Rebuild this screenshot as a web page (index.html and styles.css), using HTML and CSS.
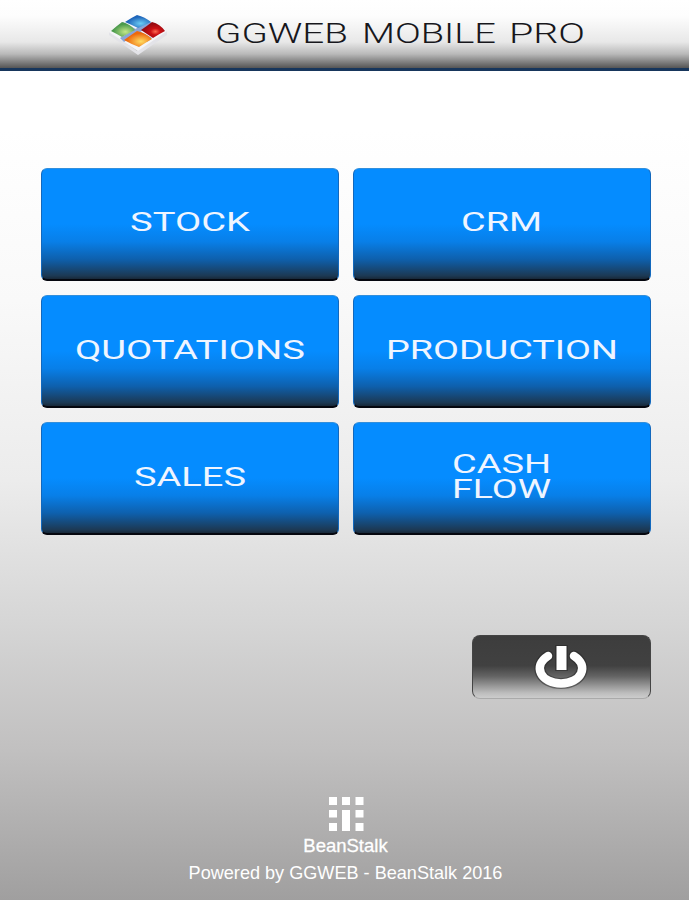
FILE: index.html
```html
<!DOCTYPE html>
<html lang="en">
<head>
    <meta charset="UTF-8">
    <meta name="viewport" content="width=device-width, initial-scale=1.0">
    <title>GGWEB Mobile Pro</title>
    <link rel="stylesheet" href="styles.css">
</head>
<body>
    <header class="header">
        <svg class="logo" width="58" height="46" viewBox="0 0 58 46">
            <defs>
                <radialGradient id="green" cx="60%" cy="65%"><stop offset="0" stop-color="#c4e78a"/><stop offset="1" stop-color="#4b9a4c"/></radialGradient>
                <radialGradient id="blue" cx="60%" cy="65%"><stop offset="0" stop-color="#6ccdf4"/><stop offset="1" stop-color="#1f66bb"/></radialGradient>
                <radialGradient id="red" cx="60%" cy="60%"><stop offset="0" stop-color="#ff6a50"/><stop offset=".4" stop-color="#cb1014"/><stop offset="1" stop-color="#960a10"/></radialGradient>
                <radialGradient id="orange" cx="60%" cy="65%"><stop offset="0" stop-color="#ffdc62"/><stop offset="1" stop-color="#ed690d"/></radialGradient>
            </defs>
            <path d="M0 18 28 37 58 17V21L29 41 0 21Z" fill="#e3e3e8"/>
            <path d="M0 18 28 1 58 17 29 37Z" fill="#f4f5f8"/>
            <path d="M14 8 43 24 38 28 10 11ZM11 24 40 7 44 10 15 28Z" fill="#8aa5d8"/>
            <path d="M2 17Q9 11 13 8 21 10 26 16 20 19 13 23 8 20 2 17Z" fill="url(#green)"/>
            <path d="M16 8Q22 4 28 1 36 3 42 8 36 11 29 14 23 11 16 8Z" fill="url(#blue)"/>
            <path d="M32 16Q38 12 43 8 51 10 56 17 50 20 44 24 38 20 32 16Z" fill="url(#red)"/>
            <path d="M15 26Q22 21 28 17 37 19 43 25 36 29 30 33 22 30 15 26Z" fill="url(#orange)"/>
        </svg>
        <svg class="title" width="372" height="40">
            <text y="29"><tspan x="0" textLength="133" lengthAdjust="spacingAndGlyphs">GGWEB</tspan> <tspan x="147" textLength="134" lengthAdjust="spacingAndGlyphs">MOBILE</tspan> <tspan x="294" textLength="76" lengthAdjust="spacingAndGlyphs">PRO</tspan></text>
        </svg>
    </header>

    <main class="menu">
        <button class="tile">
            <svg width="298" height="112"><text x="89" y="63" textLength="120" lengthAdjust="spacingAndGlyphs">STOCK</text></svg>
        </button>
        <button class="tile">
            <svg width="298" height="112"><text x="108" y="63" textLength="81" lengthAdjust="spacingAndGlyphs">CRM</text></svg>
        </button>
        <button class="tile">
            <svg width="298" height="112"><text x="34" y="64" textLength="230" lengthAdjust="spacingAndGlyphs">QUOTATIONS</text></svg>
        </button>
        <button class="tile">
            <svg width="298" height="112"><text x="33" y="64" textLength="232" lengthAdjust="spacingAndGlyphs">PRODUCTION</text></svg>
        </button>
        <button class="tile">
            <svg width="298" height="112"><text x="93" y="64" textLength="112" lengthAdjust="spacingAndGlyphs">SALES</text></svg>
        </button>
        <button class="tile">
            <svg width="298" height="112">
                <text x="99" y="51" textLength="99" lengthAdjust="spacingAndGlyphs">CASH</text>
                <text x="99" y="76" textLength="99" lengthAdjust="spacingAndGlyphs">FLOW</text>
            </svg>
        </button>
    </main>

    <div class="actions">
        <button class="power" aria-label="Exit">
            <svg width="60" height="54" viewBox="0 0 60 54">
                <g class="power-shadow">
                    <path d="M16 16C0 26 9 43.500 29 43.500S58 26 42 16"/>
                    <path class="bar" d="M29.500 5V31"/>
                </g>
                <g class="power-icon">
                    <path d="M16 16C0 26 9 43.500 29 43.500S58 26 42 16"/>
                    <path class="bar" d="M29.500 6V30"/>
                </g>
            </svg>
        </button>
    </div>

    <footer class="footer">
        <svg class="mark" width="35" height="34" viewBox="0 0 35 34">
            <path d="M0 0H8V8H0ZM13 0H21V8H13ZM26.500 0H34.500V8H26.500ZM0 13H8V20.500H0ZM13 13H21V34H13ZM26.500 13H34.500V20.500H26.500ZM0 26H8V34H0ZM26.500 26H34.500V34H26.500Z"/>
        </svg>
        <div class="brand">BeanStalk</div>
        <div class="powered">Powered by GGWEB - BeanStalk 2016</div>
    </footer>
</body>
</html>
```
FILE: styles.css
```css
* {
    box-sizing: border-box;
}

body {
    margin: 0;
    height: 900px;
    display: flex;
    flex-direction: column;
    overflow: hidden;
    font-family: "Liberation Sans", Arial, sans-serif;
    background: linear-gradient(#ffffff 0, #ffffff 130px, #f9f9f9 300px, #ececec 480px, #d6d6d6 620px, #c1c0c0 750px, #a9a8a8 860px, #a09f9f 900px);
}

.header {
    display: flex;
    align-items: flex-start;
    flex-shrink: 0;
    height: 71px;
    padding: 14px 0 0 109px;
    border-bottom: 3px solid #17365c;
    background: linear-gradient(#ffffff 0, #fdfdfd 16px, #e8e8e8 42px, #b9b9b9 54px, #555555 68px);
}

.title {
    margin-left: 48px;
    font-family: Roboto, sans-serif;
    font-size: 27px;
    font-weight: 300;
    fill: #17171c;
}

.menu {
    display: grid;
    grid-template-columns: 298px 298px;
    grid-auto-rows: 112.500px;
    gap: 14.500px 14px;
    margin: 97px 0 0 41px;
}

.tile {
    padding: 0;
    border: 1px solid #1268bd;
    border-top-color: #328fdc;
    border-bottom: 2px solid #05070f;
    border-radius: 6px;
    overflow: hidden;
    cursor: pointer;
    background: linear-gradient(#058cff 0, #058cff 50%, #087fe8 66%, #0e60ad 82%, #1c3954 97%, #182838 100%);
}

.tile svg {
    display: block;
    margin: -1px;
}

.tile text {
    font-family: Roboto, sans-serif;
    font-size: 26px;
    font-weight: 400;
    fill: #eff5ff;
}

.actions {
    display: flex;
    justify-content: flex-end;
    margin: 100.500px 38px 0 0;
}

.power {
    display: flex;
    justify-content: center;
    width: 179px;
    height: 64px;
    padding: 4px 0 0;
    border: 1px solid #444444;
    border-bottom-color: #aaaaaa;
    border-radius: 8px;
    cursor: pointer;
    background: linear-gradient(#3d3d3d 0, #414141 48%, #646464 65%, #bdbdbd 92%, #cccccc 100%);
}

.power path {
    fill: none;
    stroke: #ffffff;
    stroke-width: 8.500;
    stroke-linecap: round;
}

.power .bar {
    stroke-width: 10;
    stroke-linecap: butt;
}

.power .power-shadow path {
    stroke: #242424;
    stroke-width: 11;
    opacity: .5;
}

.power .power-shadow .bar {
    stroke-width: 13;
}

.footer {
    display: flex;
    flex-direction: column;
    align-items: center;
    margin-top: 98px;
    color: #ffffff;
}

.mark {
    margin-left: 3px;
    fill: #ffffff;
}

.brand {
    margin: 5px 0 0 2px;
    font-size: 18.500px;
    line-height: 20px;
    -webkit-text-stroke: .3px #ffffff;
}

.powered {
    margin: 7px 0 0 2px;
    font-size: 18.100px;
    line-height: 20px;
    white-space: nowrap;
}
```
